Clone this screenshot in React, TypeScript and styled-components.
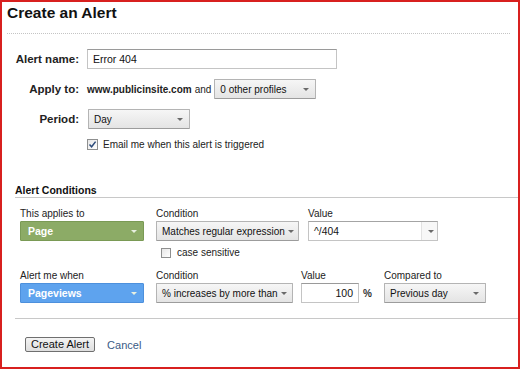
import React from "react";
import styled, { createGlobalStyle } from "styled-components";

const Global = createGlobalStyle`
  html, body { margin: 0; padding: 0; background: #fff; }
  body { font-family: "Liberation Sans", Arial, sans-serif; color: #222; }
  * { box-sizing: border-box; }
`;

const Frame = styled.div`
  width: 520px;
  height: 369px;
  border: 2px solid #d8201f;
  background: #fff;
  padding-top: 2px;
  display: flex;
  flex-direction: column;
`;

const Title = styled.h1`
  margin: 0;
  padding-left: 5px;
  font-size: 15.5px;
  line-height: 18px;
  font-weight: bold;
  color: #111;
`;

const Dotted = styled.div`
  margin: 11px 8px 0 5px;
  border-top: 1px dotted #c4c4c4;
`;

const FormGrid = styled.div`
  margin-top: 15px;
  display: grid;
  grid-template-columns: 77px auto;
  column-gap: 8px;
  row-gap: 10px;
  align-items: center;
`;

const Label = styled.div`
  text-align: right;
  font-size: 11.5px;
  font-weight: bold;
  color: #222;
  line-height: 20px;
`;

const Cell = styled.div<{ $col?: number }>`
  grid-column: ${(p) => p.$col ?? "auto"};
  display: flex;
  align-items: center;
  gap: 3px;
  height: ${(p) => (p.$col ? "11px" : "20px")};
`;

const TextInput = styled.div<{ $w: number; $right?: boolean }>`
  width: ${(p) => p.$w}px;
  height: 20px;
  border: 1px solid #c4c4c4;
  border-top-color: #9a9a9a;
  background: #fff;
  font-size: 10.5px;
  padding: 0 5px;
  color: #111;
  display: flex;
  align-items: center;
  justify-content: ${(p) => (p.$right ? "flex-end" : "flex-start")};
`;

const Site = styled.span`
  font-size: 10px;
  font-weight: bold;
  color: #222;
`;

const Plain = styled.span`
  font-size: 10px;
  color: #222;
`;

const Select = styled.div<{ $w: number; $tone?: "green" | "blue" }>`
  width: ${(p) => p.$w}px;
  height: 20px;
  display: flex;
  align-items: center;
  justify-content: space-between;
  padding: 0 6px 0 5px;
  font-size: 10px;
  border-radius: 1px;
  white-space: nowrap;
  overflow: hidden;
  ${(p) =>
    p.$tone === "green"
      ? `background: #8cab66; border: 1px solid #7a9a55; color: #fff; font-weight: bold; padding-left: 7px; font-size: 10.5px;`
      : p.$tone === "blue"
      ? `background: #5ea3ee; border: 1px solid #4d90dc; color: #fff; font-weight: bold; padding-left: 7px; font-size: 10.5px;`
      : `background: linear-gradient(#f6f6f6, #e4e4e4); border: 1px solid #b4b4b4; border-bottom-color: #9c9c9c; color: #111;`}
`;

const Arrow = styled.span<{ $light?: boolean }>`
  width: 0;
  height: 0;
  flex: none;
  margin-left: 3px;
  border-left: 3px solid transparent;
  border-right: 3px solid transparent;
  border-top: 3px solid ${(p) => (p.$light ? "#e8f0e0" : "#6a6a6a")};
`;

const Combo = styled.div<{ $w: number }>`
  width: ${(p) => p.$w}px;
  height: 20px;
  display: flex;
  border: 1px solid #c4c4c4;
  border-top-color: #a4a4a4;
  background: #fff;
  font-size: 10.3px;
`;

const ComboText = styled.div`
  flex: 1;
  padding-left: 5px;
  display: flex;
  align-items: center;
  color: #111;
`;

const ComboBtn = styled.div`
  width: 16px;
  border-left: 1px solid #e2e2e2;
  background: #f7f7f7;
  display: flex;
  align-items: center;
  justify-content: center;
`;

const Check = styled.span<{ $size: number }>`
  width: ${(p) => p.$size}px;
  height: ${(p) => p.$size}px;
  flex: none;
  border: 1px solid #8e8f8f;
  background: linear-gradient(135deg, #e6e6e6, #fff);
  display: flex;
  align-items: center;
  justify-content: center;
`;

const CheckLabel = styled.span`
  font-size: 10px;
  color: #222;
  margin-left: 2px;
`;

const Conditions = styled.section`
  margin-left: 13px;
  margin-top: 34px;
  display: flex;
  flex-direction: column;
`;

const SectionHead = styled.h2`
  margin: 0;
  font-size: 10.5px;
  font-weight: bold;
  line-height: 13px;
  color: #111;
  border-bottom: 1px solid #c8c8c8;
`;

const Row = styled.div<{ $top: number }>`
  display: flex;
  padding-left: 5px;
  margin-top: ${(p) => p.$top}px;
`;

const Field = styled.div<{ $w?: number }>`
  width: ${(p) => (p.$w ? `${p.$w}px` : "auto")};
  display: flex;
  flex-direction: column;
  gap: 1px;
`;

const FieldLabel = styled.div`
  font-size: 10px;
  line-height: 13px;
  color: #222;
`;

const Inline = styled.div`
  display: flex;
  align-items: center;
  gap: 4px;
`;

const Pct = styled.span`
  font-size: 10px;
  font-weight: bold;
  color: #333;
`;

const CaseRow = styled.div`
  margin-top: 6px;
  padding-left: 146px;
  display: flex;
  align-items: center;
  gap: 4px;
`;

const Footer = styled.div`
  margin-top: 15px;
  border-top: 1px solid #c8c8c8;
  padding: 18px 0 0 10px;
  display: flex;
  align-items: center;
  gap: 12px;
`;

const Button = styled.button`
  height: 15px;
  padding: 0 5px;
  font-family: "Liberation Sans", Arial, sans-serif;
  font-size: 11px;
  line-height: 13px;
  color: #111;
  background: linear-gradient(#f4f4f4, #dedede);
  border: 1px solid #6f6f6f;
  border-radius: 2px;
`;

const Link = styled.a`
  font-size: 11px;
  color: #3b5b86;
  text-decoration: none;
`;

const Tick = () => (
  <svg width="9" height="9" viewBox="0 0 9 9">
    <path d="M1.5 4.5 L3.6 6.8 L7.6 1.6" fill="none" stroke="#2b4a7a" strokeWidth="1.5" />
  </svg>
);

export default function App() {
  return (
    <>
      <Global />
      <Frame>
        <Title>Create an Alert</Title>
        <Dotted />
        <FormGrid>
          <Label>Alert name:</Label>
          <Cell>
            <TextInput $w={250}>Error 404</TextInput>
          </Cell>
          <Label>Apply to:</Label>
          <Cell>
            <Site>www.publicinsite.com</Site>
            <Plain>and</Plain>
            <Select $w={102}>
              0 other profiles
              <Arrow />
            </Select>
          </Cell>
          <Label>Period:</Label>
          <Cell>
            <Select $w={102} style={{ marginLeft: 1 }}>
              Day
              <Arrow />
            </Select>
          </Cell>
          <Cell $col={2}>
            <Check $size={11}>
              <Tick />
            </Check>
            <CheckLabel>Email me when this alert is triggered</CheckLabel>
          </Cell>
        </FormGrid>

        <Conditions>
          <SectionHead>Alert Conditions</SectionHead>
          <Row $top={9}>
            <Field $w={136}>
              <FieldLabel>This applies to</FieldLabel>
              <Select $w={124} $tone="green">
                Page
                <Arrow $light />
              </Select>
            </Field>
            <Field $w={152}>
              <FieldLabel>Condition</FieldLabel>
              <Select $w={143}>
                Matches regular expression
                <Arrow />
              </Select>
            </Field>
            <Field>
              <FieldLabel>Value</FieldLabel>
              <Combo $w={130}>
                <ComboText>^/404</ComboText>
                <ComboBtn>
                  <Arrow />
                </ComboBtn>
              </Combo>
            </Field>
          </Row>
          <CaseRow>
            <Check $size={10} />
            <CheckLabel>case sensitive</CheckLabel>
          </CaseRow>
          <Row $top={11}>
            <Field $w={136}>
              <FieldLabel>Alert me when</FieldLabel>
              <Select $w={124} $tone="blue">
                Pageviews
                <Arrow $light />
              </Select>
            </Field>
            <Field $w={145}>
              <FieldLabel>Condition</FieldLabel>
              <Select $w={137}>
                % increases by more than
                <Arrow />
              </Select>
            </Field>
            <Field $w={83}>
              <FieldLabel>Value</FieldLabel>
              <Inline>
                <TextInput $w={58} $right>
                  100
                </TextInput>
                <Pct>%</Pct>
              </Inline>
            </Field>
            <Field>
              <FieldLabel>Compared to</FieldLabel>
              <Select $w={102}>
                Previous day
                <Arrow />
              </Select>
            </Field>
          </Row>
          <Footer>
            <Button>Create Alert</Button>
            <Link href="#">Cancel</Link>
          </Footer>
        </Conditions>
      </Frame>
    </>
  );
}
